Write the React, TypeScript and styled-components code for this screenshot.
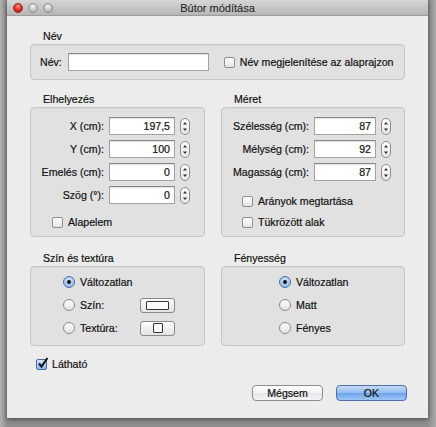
import React from 'react';
import styled, { createGlobalStyle, css } from 'styled-components';

const Global = createGlobalStyle`
  html, body { margin: 0; padding: 0; }
  body {
    background: #9f9f9f;
    font-family: "Liberation Sans", Arial, sans-serif;
    font-size: 10.6px;
    color: #111;
    -webkit-text-stroke: 0.2px #111;
  }
  * { box-sizing: border-box; }
`;

const Screen = styled.div`
  width: 436px;
  height: 427px;
  padding: 0 8px 0 7px;
  overflow: hidden;
  background: linear-gradient(to right, #b3b3b3 0px, #8e8e8e 7px, #8e8e8e 428px, #a9a9a9 436px);
`;

const Window = styled.div`
  width: 421px;
  height: 418px;
  background: #ececec;
  box-shadow: 0 1px 5px rgba(0, 0, 0, 0.55);
  display: flex;
  flex-direction: column;
`;

const TitleBar = styled.div`
  height: 16px;
  display: grid;
  grid-template-columns: 1fr auto 1fr;
  align-items: center;
  background: linear-gradient(#d6d6d6, #b6b6b6);
  border-bottom: 1px solid #9c9c9c;
`;

const Lights = styled.div`
  display: flex;
  gap: 5px;
  padding-left: 6px;
`;

const Light = styled.span<{ $red?: boolean }>`
  width: 10px;
  height: 10px;
  border-radius: 50%;
  ${({ $red }) =>
    $red
      ? css`
          background: radial-gradient(circle at 50% 30%, #ff9a8a 0%, #e0362a 45%, #a8150e 100%);
          border: 1px solid #8a2a22;
        `
      : css`
          background: radial-gradient(circle at 50% 30%, #f4f4f4 0%, #c9c9c9 50%, #a5a5a5 100%);
          border: 1px solid #8e8e8e;
        `}
`;

const Title = styled.div`
  font-size: 11px;
  color: #262626;
  line-height: 14px;
  -webkit-text-stroke: 0.1px #262626;
`;

const Content = styled.div`
  display: flex;
  flex-direction: column;
  padding: 0 23px;
`;

const SectionTitle = styled.div<{ $top: number }>`
  margin-top: ${({ $top }) => $top}px;
  padding-left: 13px;
  line-height: 12px;
  height: 12px;
  margin-bottom: 2px;
`;

const GroupBox = styled.div<{ $h: number }>`
  height: ${({ $h }) => $h}px;
  background: #e1e1e1;
  border: 1px solid #c6c6c6;
  border-radius: 4px;
  box-shadow: inset 0 1px 1px rgba(0, 0, 0, 0.04);
`;

const NameBox = styled(GroupBox)`
  display: flex;
  align-items: center;
  padding-left: 9px;
`;

const Columns = styled.div`
  display: grid;
  grid-template-columns: 175px 184px;
  column-gap: 16px;
`;

const Column = styled.div`
  display: flex;
  flex-direction: column;
`;

const SpinBox = styled(GroupBox)<{ $inputW: number; $padR: number }>`
  display: grid;
  grid-template-columns: 1fr ${({ $inputW }) => $inputW}px 10px;
  column-gap: 5px;
  row-gap: 5px;
  align-content: start;
  align-items: center;
  padding: 9px ${({ $padR }) => $padR}px 0 4px;
`;

const FieldLabel = styled.label`
  text-align: right;
  white-space: nowrap;
`;

const TextField = styled.input<{ $w?: number; $align?: string }>`
  width: ${({ $w }) => ($w ? `${$w}px` : '100%')};
  height: 18px;
  border: 1px solid #a2a2a2;
  border-top-color: #878787;
  box-shadow: inset 0 1px 1px rgba(0, 0, 0, 0.12);
  background: #fff;
  font: inherit;
  color: #111;
  text-align: ${({ $align }) => $align || 'left'};
  padding: 0 4px;
  outline: none;
  border-radius: 0;
`;

const StepperBox = styled.div`
  width: 10px;
  height: 17px;
  border: 1px solid #8c8c8c;
  border-radius: 5px;
  background: linear-gradient(#ffffff, #e6e6e6);
  display: flex;
  align-items: center;
  justify-content: center;
`;

const Stepper = () => (
  <StepperBox>
    <svg width="6" height="11" viewBox="0 0 6 11">
      <path d="M3 1 L5 3.5 L1 3.5 Z" fill="#333" />
      <path d="M3 10 L5 7.5 L1 7.5 Z" fill="#333" />
    </svg>
  </StepperBox>
);

const CheckRow = styled.div<{ $top?: number; $left?: number }>`
  display: flex;
  align-items: center;
  gap: 5px;
  height: 14px;
  margin-top: ${({ $top }) => $top ?? 0}px;
  padding-left: ${({ $left }) => $left ?? 0}px;
  white-space: nowrap;
`;

const CheckSpan = styled.div`
  grid-column: 1 / -1;
`;

const BoxMark = styled.span<{ $checked?: boolean }>`
  width: 11px;
  height: 11px;
  border-radius: 2px;
  border: 1px solid ${({ $checked }) => ($checked ? '#4d6c9e' : '#8f8f8f')};
  background: ${({ $checked }) =>
    $checked ? 'linear-gradient(#cfe3fb, #8ab8ee)' : 'linear-gradient(#ffffff, #e4e4e4)'};
  position: relative;
  flex: none;
`;

const CheckGlyph = styled.svg`
  position: absolute;
  left: 0px;
  top: -3px;
`;

const Checkbox = ({ checked }: { checked?: boolean }) => (
  <BoxMark $checked={checked}>
    {checked && (
      <CheckGlyph width="12" height="12" viewBox="0 0 12 12">
        <path d="M2 6.5 L4.5 9.5 L10.5 1" stroke="#111" strokeWidth="2" fill="none" />
      </CheckGlyph>
    )}
  </BoxMark>
);

const RadioBox = styled(GroupBox)<{ $left: number }>`
  display: flex;
  flex-direction: column;
  gap: 7px;
  padding: 7px 0 0 ${({ $left }) => $left}px;
`;

const RadioRow = styled.div`
  display: flex;
  align-items: center;
  height: 16px;
`;

const RadioLabel = styled.div<{ $w?: number }>`
  display: flex;
  align-items: center;
  gap: 5px;
  width: ${({ $w }) => ($w ? `${$w}px` : 'auto')};
  white-space: nowrap;
`;

const RadioMark = styled.span<{ $on?: boolean }>`
  width: 12px;
  height: 12px;
  border-radius: 50%;
  flex: none;
  display: flex;
  align-items: center;
  justify-content: center;
  border: 1px solid ${({ $on }) => ($on ? '#4f6f9f' : '#8c8c8c')};
  background: ${({ $on }) =>
    $on ? 'radial-gradient(circle at 50% 35%, #d8e8fb, #8cb8ec 80%)' : 'linear-gradient(#ffffff, #e2e2e2)'};
  &::after {
    content: '';
    display: ${({ $on }) => ($on ? 'block' : 'none')};
    width: 4px;
    height: 4px;
    border-radius: 50%;
    background: #111;
  }
`;

const SwatchButton = styled.div`
  width: 35px;
  height: 15px;
  border: 1px solid #8a8a8a;
  border-radius: 3px;
  background: linear-gradient(#fdfdfd, #e3e3e3);
  display: flex;
  align-items: center;
  justify-content: center;
`;

const Swatch = styled.span<{ $w: number; $h: number }>`
  width: ${({ $w }) => $w}px;
  height: ${({ $h }) => $h}px;
  border: 1px solid #333;
  border-radius: 1px;
  background: #fafafa;
`;

const ButtonRow = styled.div`
  display: flex;
  justify-content: flex-end;
  gap: 13px;
  margin-top: 14px;
  margin-right: -2px;
`;

const PushButton = styled.button<{ $primary?: boolean }>`
  width: 71px;
  height: 16px;
  padding: 0;
  font: inherit;
  color: #111;
  border-radius: 4px;
  line-height: 14px;
  ${({ $primary }) =>
    $primary
      ? css`
          border: 1px solid #4e6fa8;
          background: linear-gradient(#c6dcf8, #8ebaf0 50%, #6ea5ec 51%, #9cc6f6);
        `
      : css`
          border: 1px solid #8d8d8d;
          background: linear-gradient(#ffffff, #f2f2f2 50%, #e6e6e6 51%, #f4f4f4);
        `}
`;

type Spin = { label: string; value: string };
const placement: Spin[] = [
  { label: 'X (cm):', value: '197,5' },
  { label: 'Y (cm):', value: '100' },
  { label: 'Emelés (cm):', value: '0' },
  { label: 'Szög (°):', value: '0' },
];
const size: Spin[] = [
  { label: 'Szélesség (cm):', value: '87' },
  { label: 'Mélység (cm):', value: '92' },
  { label: 'Magasság (cm):', value: '87' },
];

const SpinRows = ({ rows, w }: { rows: Spin[]; w: number }) => (
  <>
    {rows.map((r) => (
      <React.Fragment key={r.label}>
        <FieldLabel>{r.label}</FieldLabel>
        <TextField $w={w} $align="right" defaultValue={r.value} />
        <Stepper />
      </React.Fragment>
    ))}
  </>
);

export default function App() {
  return (
    <>
      <Global />
      <Screen>
        <Window>
          <TitleBar>
            <Lights>
              <Light $red />
              <Light />
              <Light />
            </Lights>
            <Title>Bútor módítása</Title>
            <div />
          </TitleBar>
          <Content>
            <SectionTitle $top={14}>Név</SectionTitle>
            <NameBox $h={36}>
              <FieldLabel>Név:</FieldLabel>
              <TextField $w={141} style={{ marginLeft: 6 }} defaultValue="" />
              <CheckRow $left={15}>
                <Checkbox />
                Név megjelenítése az alaprajzon
              </CheckRow>
            </NameBox>

            <Columns>
              <Column>
                <SectionTitle $top={13}>Elhelyezés</SectionTitle>
                <SpinBox $h={130} $inputW={66} $padR={14}>
                  <SpinRows rows={placement} w={66} />
                  <CheckSpan>
                    <CheckRow $top={6} $left={17}>
                      <Checkbox />
                      Alapelem
                    </CheckRow>
                  </CheckSpan>
                </SpinBox>
                <SectionTitle $top={15}>Szín és textúra</SectionTitle>
                <RadioBox $h={80} $left={32}>
                  <RadioRow>
                    <RadioLabel>
                      <RadioMark $on />
                      Változatlan
                    </RadioLabel>
                  </RadioRow>
                  <RadioRow>
                    <RadioLabel $w={77}>
                      <RadioMark />
                      Szín:
                    </RadioLabel>
                    <SwatchButton>
                      <Swatch $w={23} $h={9} />
                    </SwatchButton>
                  </RadioRow>
                  <RadioRow>
                    <RadioLabel $w={77}>
                      <RadioMark />
                      Textúra:
                    </RadioLabel>
                    <SwatchButton>
                      <Swatch $w={10} $h={10} />
                    </SwatchButton>
                  </RadioRow>
                </RadioBox>
              </Column>
              <Column>
                <SectionTitle $top={13}>Méret</SectionTitle>
                <SpinBox $h={130} $inputW={62} $padR={13}>
                  <SpinRows rows={size} w={62} />
                  <CheckSpan>
                    <CheckRow $top={8} $left={16}>
                      <Checkbox />
                      Arányok megtartása
                    </CheckRow>
                    <CheckRow $top={7} $left={16}>
                      <Checkbox />
                      Tükrözött alak
                    </CheckRow>
                  </CheckSpan>
                </SpinBox>
                <SectionTitle $top={15}>Fényesség</SectionTitle>
                <RadioBox $h={80} $left={57}>
                  <RadioRow>
                    <RadioLabel>
                      <RadioMark $on />
                      Változatlan
                    </RadioLabel>
                  </RadioRow>
                  <RadioRow>
                    <RadioLabel>
                      <RadioMark />
                      Matt
                    </RadioLabel>
                  </RadioRow>
                  <RadioRow>
                    <RadioLabel>
                      <RadioMark />
                      Fényes
                    </RadioLabel>
                  </RadioRow>
                </RadioBox>
              </Column>
            </Columns>

            <CheckRow $top={11} $left={6}>
              <Checkbox checked />
              Látható
            </CheckRow>

            <ButtonRow>
              <PushButton>Mégsem</PushButton>
              <PushButton $primary>OK</PushButton>
            </ButtonRow>
          </Content>
        </Window>
      </Screen>
    </>
  );
}
